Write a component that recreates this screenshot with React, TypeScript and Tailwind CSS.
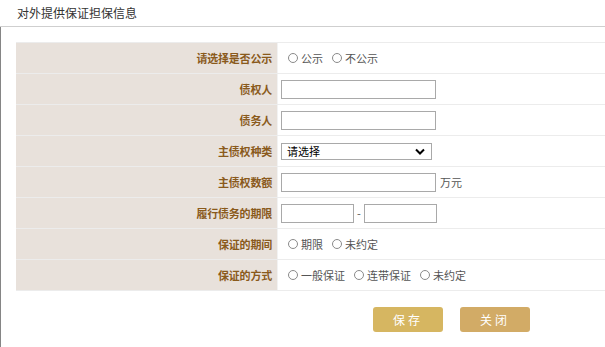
import React from "react";

const font = { fontFamily: '"Noto Sans CJK SC", "Liberation Sans", sans-serif' };

const Radio: React.FC<{ label: string }> = ({ label }) => (
  <label className="flex items-center mr-[9px] text-[11px] text-[#555]">
    <span className="inline-block w-[10px] h-[10px] rounded-full border border-[#8a8a8a] bg-white mr-[3px]" />
    {label}
  </label>
);

const Row: React.FC<{ label: string; children?: React.ReactNode }> = ({ label, children }) => (
  <div className="flex h-[31px] border-b border-[#ececec]">
    <div className="w-[261px] bg-[#e8e1db] flex items-center justify-end pr-[5px] text-[11px] tracking-[-0.2px] font-bold text-[#8a5a1c]">
      {label}
    </div>
    <div className="w-px bg-[#f2f2f2]" />
    <div className="flex-1 flex items-center pl-[3px]">{children}</div>
  </div>
);

const Input: React.FC<{ w: string }> = ({ w }) => (
  <div className={`${w} h-[19px] border border-[#a9a9a9] bg-white`} />
);

export default function App() {
  return (
    <div className="w-[605px] h-[347px] bg-white overflow-hidden" style={font}>
      <div className="h-[27px] border-b border-[#cfcfcf] pl-[17px] pt-[5px] text-[12px] text-[#333] leading-[16px]">
        对外提供保证担保信息
      </div>
      <div className="h-[320px] border-l border-[#858585] pl-[15px] pt-[15px]">
        <div className="border-t border-[#ececec]">
          <Row label="请选择是否公示">
            <div className="flex pl-[7px]">
              <Radio label="公示" />
              <Radio label="不公示" />
            </div>
          </Row>
          <Row label="债权人">
            <Input w="w-[155px]" />
          </Row>
          <Row label="债务人">
            <Input w="w-[155px]" />
          </Row>
          <Row label="主债权种类">
            <div className="w-[151px] h-[17px] border border-[#a9a9a9] bg-white flex items-center justify-between pl-[5px] pr-[6px] text-[11px] text-black">
              <span>请选择</span>
              <svg width="10" height="7" viewBox="0 0 10 7">
                <path d="M1 1.5 L5 5.5 L9 1.5" fill="none" stroke="#000" strokeWidth="2" />
              </svg>
            </div>
          </Row>
          <Row label="主债权数额">
            <Input w="w-[155px]" />
            <span className="ml-[4px] text-[11px] text-[#555]">万元</span>
          </Row>
          <Row label="履行债务的期限">
            <Input w="w-[73px]" />
            <span className="mx-[3px] text-[11px] text-[#555]">-</span>
            <Input w="w-[73px]" />
          </Row>
          <Row label="保证的期间">
            <div className="flex pl-[7px]">
              <Radio label="期限" />
              <Radio label="未约定" />
            </div>
          </Row>
          <Row label="保证的方式">
            <div className="flex pl-[7px]">
              <Radio label="一般保证" />
              <Radio label="连带保证" />
              <Radio label="未约定" />
            </div>
          </Row>
        </div>
        <div className="flex pl-[357px] pt-[16px] gap-[17px]">
          <button className="w-[70px] h-[25px] rounded-[3px] bg-[#d6b661] text-white text-[12px] tracking-[3px]">
            保存
          </button>
          <button className="w-[70px] h-[25px] rounded-[3px] bg-[#d2ab66] text-white text-[12px] tracking-[3px]">
            关闭
          </button>
        </div>
      </div>
    </div>
  );
}
